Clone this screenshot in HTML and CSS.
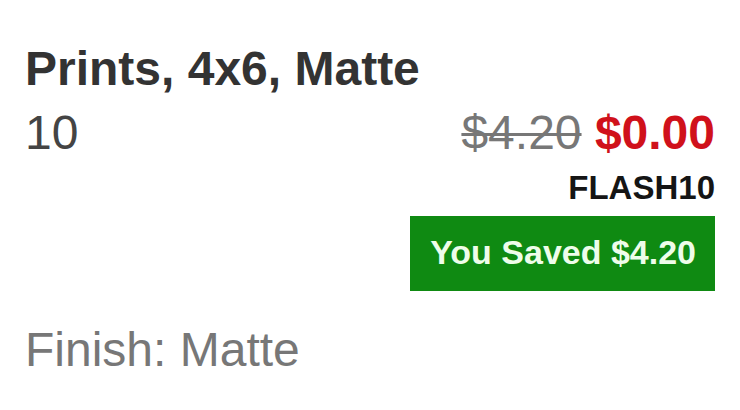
FILE: index.html
```html
<!DOCTYPE html>
<html>
<head>
<meta charset="utf-8">
<link rel="stylesheet" href="styles.css">
</head>
<body>
<div class="item">
  <div class="title">Prints, 4x6, Matte</div>
  <div class="row">
    <div class="qty">10</div>
    <div class="prices"><span class="old">$4.20</span> <span class="new">$0.00</span></div>
  </div>
  <div class="right">
    <div class="code">FLASH10</div>
    <div class="saved">You Saved $4.20</div>
  </div>
  <div class="finish">Finish: Matte</div>
</div>
</body>
</html>
```
FILE: styles.css
```css
html, body {
  margin: 0;
  padding: 0;
  background: #ffffff;
}
.item {
  font-family: "Liberation Sans", Arial, sans-serif;
  padding: 41px 25px 0 25px;
}
.title {
  font-size: 48px;
  line-height: 56px;
  font-weight: bold;
  color: #333333;
}
.row {
  display: flex;
  justify-content: space-between;
  margin-top: 8px;
  font-size: 48px;
  line-height: 56px;
}
.qty {
  color: #444444;
}
.old {
  color: #777777;
  text-decoration: line-through;
  text-decoration-thickness: 3px;
}
.new {
  color: #d0111b;
  font-weight: bold;
}
.right {
  display: flex;
  flex-direction: column;
  align-items: flex-end;
}
.code {
  margin-top: 7px;
  font-size: 33px;
  line-height: 40px;
  font-weight: bold;
  color: #151515;
}
.saved {
  margin-top: 8px;
  background: #0f8a12;
  color: #eefdea;
  font-size: 34px;
  line-height: 40px;
  font-weight: bold;
  padding: 16px 19px 19px 20px;
}
.finish {
  margin-top: 31px;
  font-size: 48px;
  line-height: 56px;
  color: #777777;
}
```
